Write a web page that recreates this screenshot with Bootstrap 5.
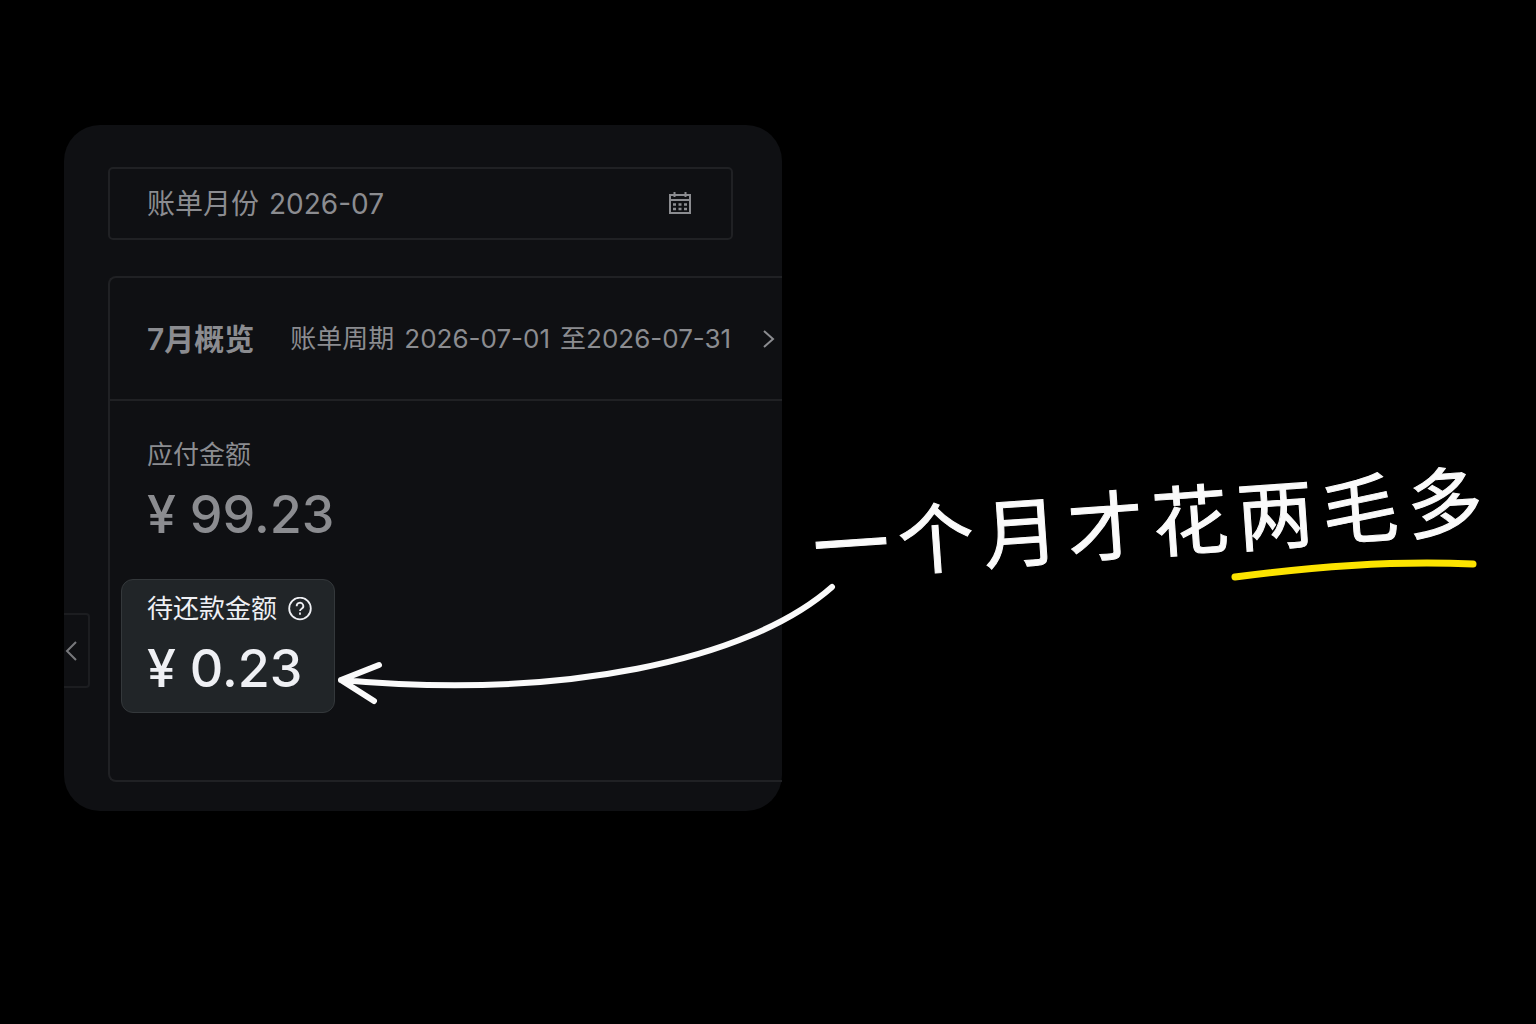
<!DOCTYPE html>
<html lang="zh-CN" data-bs-theme="dark">
<head>
<meta charset="utf-8">
<meta name="viewport" content="width=device-width, initial-scale=1">
<title>账单概览</title>
<link href="https://cdn.jsdelivr.net/npm/bootstrap@5.3.0/dist/css/bootstrap.min.css" rel="stylesheet">
<style>
  body { background: #000; color: #8b8c90; font-family: Inter, "Noto Sans CJK SC", sans-serif; }
  .stage { padding: 125px 48px 125px 64px; }
  .bill { flex: 0 1 718px; background: #0f1013; border-radius: 36px; padding: 42px 0 29px 44px; }
  .picker { height: 73px; margin: 0 49px 36px 0; padding: 0 40px 0 37px; border: 2px solid #202124; border-radius: 5px; font-size: 28px; gap: 10px; }
  .picker input { color: inherit; outline: 0; width: 0; }
  .icon-button { color: inherit; line-height: 0; }
  .overview { border: 2px solid #202124; border-right: 0; border-radius: 8px 0 0 8px; }
  .overview-head { height: 123px; padding: 0 6px 0 37px; border-bottom: 2px solid #202124; white-space: nowrap; }
  .overview-head h1 { color: inherit; font-size: 30px; line-height: 40px; font-weight: 600; }
  .period { font-size: 26px; line-height: 40px; margin-left: 36px; gap: 10px; }
  .overview-body { padding: 24px 11px 67px; }
  .stat { padding: 11px 25px 12px; border: 1px solid transparent; border-radius: 12px; width: 214px; white-space: nowrap; }
  .stat-due { margin-top: 20px; background: #212528; border-color: #34383b; color: #eff0f4; }
  .stat-name { font-size: 26px; line-height: 36px; gap: 11px; }
  .stat-sum { font-size: 52px; line-height: 60px; margin-top: 12px; margin-bottom: 1px; font-weight: 500; }
  .collapse-tab { left: 0; top: 488px; width: 26px; height: 75px; color: #77787c; border: 2px solid #1c1d20; border-left: 0; border-radius: 0 4px 4px 0; }
  .arrow { left: 213px; top: 0; width: 510px; pointer-events: none; }
  .remark { padding: 102px 0 0 30px; color: #fafafa; }
  .remark p { font-size: 76px; line-height: 96px; gap: 9px; white-space: nowrap; transform: rotate(-4deg); font-family: "Noto Sans CJK SC", sans-serif; -webkit-text-stroke: 1px #fafafa; }
  .underline { right: 6px; top: 85px; width: 246px; }
</style>
</head>
<body>
<main class="stage d-flex flex-wrap flex-xl-nowrap align-items-center">
  <section class="bill position-relative">
    <form class="picker d-flex align-items-center">
      <label for="month" class="text-nowrap">账单月份</label>
      <input id="month" type="text" value="2026-07" class="bg-transparent border-0 p-0 flex-grow-1">
      <button type="button" class="icon-button btn p-0 border-0" aria-label="选择月份">
        <svg width="22" height="24" viewBox="0 0 22 24" fill="none" stroke="currentColor" stroke-width="2">
          <path d="M1 3h20v18H1zM1 8h20M5.500 0v5M16.500 0v5"/>
          <path d="M4 12.500h14M4 17h14" stroke-width="2.500" stroke-dasharray="3 2.500"/>
        </svg>
      </button>
    </form>
    <div class="overview">
      <header class="overview-head d-flex align-items-center">
        <h1 class="mb-0">7月概览</h1>
        <div class="period d-flex"><span>账单周期</span><span>2026-07-01</span><span>至2026-07-31</span></div>
        <button type="button" class="icon-button btn p-0 border-0 ms-auto" aria-label="下一项">
          <svg width="14" height="20" viewBox="0 0 14 20" fill="none" stroke="currentColor" stroke-width="2"><path d="M2 2l9 8-9 8"/></svg>
        </button>
      </header>
      <div class="overview-body">
        <div class="stat">
          <div class="stat-name">应付金额</div>
          <div class="stat-sum">¥ 99.23</div>
        </div>
        <div class="stat stat-due position-relative">
          <div class="stat-name d-flex align-items-center">待还款金额
            <button type="button" class="icon-button btn p-0 border-0" aria-label="说明">
              <svg width="24" height="24" viewBox="0 0 24 24" fill="none" stroke="currentColor" stroke-width="1.800">
                <circle cx="12" cy="11.500" r="10.800"/>
                <path d="M8.700 9.200a3.300 3.200 0 1 1 5 2.500c-1.200.800-1.700 1.100-1.700 2.300M12 15.500v2.200"/>
              </svg>
            </button>
          </div>
          <div class="stat-sum">¥ 0.23</div>
          <svg class="arrow position-absolute" viewBox="335 580 510 130" fill="none" stroke="#fafafa" stroke-width="6" stroke-linecap="round" stroke-linejoin="round" aria-hidden="true">
            <path d="M832 587C748 661 560 700 341 680M379 665L341 680L374 701"/>
          </svg>
        </div>
      </div>
    </div>
    <button type="button" class="collapse-tab icon-button btn position-absolute p-0" aria-label="收起">
      <svg width="22" height="22" viewBox="0 0 22 22" fill="none" stroke="currentColor" stroke-width="2"><path d="M11 2l-9 9 9 9"/></svg>
    </button>
  </section>
  <aside class="remark">
    <div class="position-relative">
      <p class="d-flex mb-0"><span>一</span><span>个</span><span>月</span><span>才</span><span>花</span><span>两</span><span>毛</span><span>多</span></p>
      <svg class="underline position-absolute" viewBox="1231 556 246 26" fill="none" stroke="#fce300" stroke-width="7" stroke-linecap="round" aria-hidden="true">
        <path d="M1235 577C1310 567 1390 560 1473 564"/>
      </svg>
    </div>
  </aside>
</main>
<script src="https://cdn.jsdelivr.net/npm/bootstrap@5.3.0/dist/js/bootstrap.bundle.min.js"></script>
</body>
</html>
